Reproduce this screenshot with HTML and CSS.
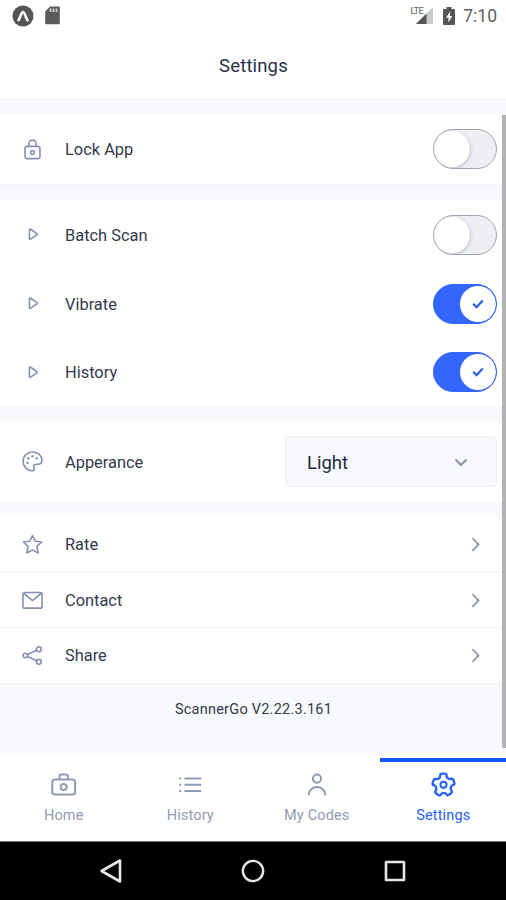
FILE: index.html
```html
<!DOCTYPE html>
<html lang="en">
<head>
<meta charset="utf-8">
<title>Settings</title>
<link rel="stylesheet" href="styles.css">
</head>
<body>
<div class="screen">
  <div class="statusbar">
    <svg class="st-expo" viewBox="0 0 22 22"><circle cx="11" cy="11" r="10.500" fill="#555"/><path d="M6.500 15.200C8.500 12.500 9.300 7 11 7s2.500 5.500 4.500 8.200" fill="none" stroke="#fff" stroke-width="2.600" stroke-linecap="round"/></svg>
    <svg class="st-sd" viewBox="0 0 15 19"><path d="M5 .5h8.500a1.300 1.300 0 0 1 1.300 1.300V17a1.300 1.300 0 0 1-1.300 1.300H1.500A1.300 1.300 0 0 1 .2 17V5.500z" fill="#5a5a5a"/><path d="M5.500 2.500v3.500M8.500 2.500v3.500M11.500 2.500v3.500" stroke="#d4d4d4" stroke-width="1.700"/></svg>
    <span class="spacer"></span>
    <span class="lte">LTE</span>
    <svg class="st-signal" viewBox="0 0 17 17"><path d="M0 17 17 0v17z" fill="#c9c9c9"/><path d="M0 17 10.500 6.500V17z" fill="#555"/></svg>
    <svg class="st-battery" viewBox="0 0 12 18"><path d="M3.500 0h5v2H11a1 1 0 0 1 1 1v14a1 1 0 0 1-1 1H1a1 1 0 0 1-1-1V3a1 1 0 0 1 1-1h2.500z" fill="#555"/><path d="M7.500 4 3 10.700h2.500V15.500L9.200 9H6.700z" fill="#fff"/></svg>
    <span class="clock">7:10</span>
  </div>
  <header class="header">Settings</header>

  <main class="content">
    <section class="group">
      <div class="row lock">
        <svg class="icon" viewBox="0 0 24 24"><rect x="4.200" y="8.800" width="15.600" height="12.700" rx="2.200"/><path d="M8.200 8.800V6a3.800 3.800 0 0 1 7.600 0v2.800"/><circle cx="12" cy="15.200" r="2"/></svg>
        <span class="label">Lock App</span>
        <span class="toggle"><span class="knob"></span></span>
      </div>
    </section>

    <section class="group options">
      <div class="row">
        <svg class="icon" viewBox="0 0 24 24"><path d="M8.800 7v9.400q.2 1 1.300.5l6.400-4.500q.8-.7 0-1.400l-6.400-4.500q-1.100-.5-1.300.5z"/></svg>
        <span class="label">Batch Scan</span>
        <span class="toggle"><span class="knob"></span></span>
      </div>
      <div class="row">
        <svg class="icon" viewBox="0 0 24 24"><path d="M8.800 7v9.400q.2 1 1.300.5l6.400-4.500q.8-.7 0-1.400l-6.400-4.500q-1.100-.5-1.300.5z"/></svg>
        <span class="label">Vibrate</span>
        <span class="toggle on"><span class="knob"><svg class="check" viewBox="0 0 12 10"><path d="M1.200 4.800 4.500 8.200 10.800 1.600"/></svg></span></span>
      </div>
      <div class="row">
        <svg class="icon" viewBox="0 0 24 24"><path d="M8.800 7v9.400q.2 1 1.300.5l6.400-4.500q.8-.7 0-1.400l-6.400-4.500q-1.100-.5-1.300.5z"/></svg>
        <span class="label">History</span>
        <span class="toggle on"><span class="knob"><svg class="check" viewBox="0 0 12 10"><path d="M1.200 4.800 4.500 8.200 10.800 1.600"/></svg></span></span>
      </div>
    </section>

    <section class="group look">
      <div class="row appearance">
        <svg class="icon" viewBox="0 0 24 24"><path d="M12.600 2.100C6.500 1.800 2.100 6.200 2.100 11.800c0 5.200 4.200 9.900 9.500 9.900 2.300 0 3-1.800 2-3.300-.9-1.600-.1-3.500 1.900-3.500h2.300c2.600 0 4.300-1.600 4.200-4.200-.3-4.900-4.500-8.400-9.400-8.600z"/><g class="dots"><circle cx="6.800" cy="13.300" r="1.300"/><circle cx="7.600" cy="8.500" r="1.300"/><circle cx="12" cy="6.400" r="1.300"/><circle cx="16.400" cy="8.500" r="1.300"/></g></svg>
        <span class="label">Apperance</span>
        <span class="select"><span class="value">Light</span><svg class="chevron-down" viewBox="0 0 14 9"><path d="M1.500 1.500 7 7l5.500-5.500"/></svg></span>
      </div>
    </section>

    <section class="group links">
      <div class="row">
        <svg class="icon" viewBox="0 0 24 24"><path d="m12 2.500 2.800 6.100 6.800.8-5 4.600 1.300 6.900L12 17.600l-5.900 3.300L7.400 14l-5-4.600 6.800-.8z"/></svg>
        <span class="label">Rate</span>
        <svg class="chevron" viewBox="0 0 9 15"><path d="m1.500 1.200 6 6.300-6 6.300"/></svg>
      </div>
      <div class="row">
        <svg class="icon" viewBox="0 0 24 24"><rect x="2" y="3.600" width="20" height="16.400" rx="1.800"/><path d="m3 4.600 9 7.500 9-7.500"/></svg>
        <span class="label">Contact</span>
        <svg class="chevron" viewBox="0 0 9 15"><path d="m1.500 1.200 6 6.300-6 6.300"/></svg>
      </div>
      <div class="row">
        <svg class="icon" viewBox="0 0 24 24"><circle cx="4.600" cy="12" r="2.300"/><circle cx="18.600" cy="5.400" r="2.500"/><circle cx="18.600" cy="18.600" r="2.500"/><path d="m6.700 11 9.600-4.500M6.700 13l9.600 4.500"/></svg>
        <span class="label">Share</span>
        <svg class="chevron" viewBox="0 0 9 15"><path d="m1.500 1.200 6 6.300-6 6.300"/></svg>
      </div>
    </section>

    <p class="version">ScannerGo V2.22.3.161</p>
    <span class="scrollbar"></span>
  </main>

  <nav class="tabs">
    <div class="tab">
      <svg viewBox="0 0 28 28"><rect x="2.300" y="8.600" width="22.800" height="15" rx="2.600"/><path d="M9.500 8.600V5.400a1.800 1.800 0 0 1 1.800-1.800h4.800a1.800 1.800 0 0 1 1.800 1.800v3.200"/><circle cx="13.700" cy="16.100" r="3"/></svg>
      <span>Home</span>
    </div>
    <div class="tab">
      <svg viewBox="0 0 28 28"><path d="M8.500 7.500h16.700M8.500 13.700h16.700M8.500 19.900h16.700M3.200 7.500h2M3.200 13.700h2M3.200 19.900h2"/></svg>
      <span>History</span>
    </div>
    <div class="tab">
      <svg viewBox="0 0 28 28"><circle cx="14" cy="7.600" r="4.100"/><path d="M5.800 24.300v-.6c0-4.600 3.600-7.600 8.200-7.600s8.200 3 8.200 7.600v.6"/></svg>
      <span>My Codes</span>
    </div>
    <div class="tab active">
      <svg class="gear" viewBox="0 0 24 24"><path d="M8.610 22a2.250 2.250 0 0 1-1.350-.46L5.190 20a2.370 2.370 0 0 1-.49-3.220 2.060 2.060 0 0 0 .23-1.860l-.06-.16a1.830 1.830 0 0 0-1.120-1.220h-.16a2.340 2.340 0 0 1-1.480-2.940L2.930 8a2.180 2.180 0 0 1 1.120-1.410 2.140 2.140 0 0 1 1.680-.12 1.930 1.930 0 0 0 1.780-.29l.13-.1a1.940 1.940 0 0 0 .73-1.510v-.24A2.320 2.320 0 0 1 10.660 2h2.550a2.260 2.260 0 0 1 1.600.67 2.370 2.370 0 0 1 .68 1.680v.28a1.760 1.760 0 0 0 .69 1.430l.11.08a1.740 1.740 0 0 0 1.590.26l.34-.11A2.260 2.260 0 0 1 21.100 7.800l.79 2.520a2.360 2.360 0 0 1-1.460 2.930l-.2.070A1.890 1.890 0 0 0 19 14.600a2 2 0 0 0 .25 1.650l.26.38a2.380 2.380 0 0 1-.5 3.230L17 21.410a2.240 2.240 0 0 1-3.220-.53l-.12-.17a1.750 1.750 0 0 0-1.500-.78 1.800 1.800 0 0 0-1.430.77l-.23.33A2.250 2.250 0 0 1 9 22a2 2 0 0 1-.39 0zM4.400 11.620a3.830 3.830 0 0 1 2.380 2.500v.12a4 4 0 0 1-.46 3.620.38.38 0 0 0 0 .51L8.470 20a.25.25 0 0 0 .37-.07l.23-.33a3.770 3.770 0 0 1 6.200 0l.12.18a.3.3 0 0 0 .18.12.25.25 0 0 0 .19-.05l2.060-1.560a.36.36 0 0 0 .07-.49l-.26-.38A4 4 0 0 1 17.100 14a3.920 3.920 0 0 1 2.490-2.610l.2-.07a.34.34 0 0 0 .19-.44l-.78-2.490a.35.35 0 0 0-.2-.19.21.21 0 0 0-.19 0l-.34.11a3.740 3.740 0 0 1-3.430-.57L15 7.650a3.760 3.760 0 0 1-1.490-3v-.31a.37.37 0 0 0-.1-.26.31.31 0 0 0-.21-.08h-2.540a.31.31 0 0 0-.29.33v.25a3.900 3.900 0 0 1-1.520 3.090l-.13.1a3.910 3.910 0 0 1-3.630.59.22.22 0 0 0-.14 0 .28.28 0 0 0-.12.15L4 11.120a.36.36 0 0 0 .22.45z"/><circle cx="12" cy="12.300" r="2.500"/></svg>
      <span>Settings</span>
    </div>
  </nav>

  <div class="system-nav">
    <svg viewBox="0 0 24 26"><path d="M21 2.500v21L2.500 13z"/></svg>
    <svg viewBox="0 0 26 26"><circle cx="13" cy="13" r="11"/></svg>
    <svg viewBox="0 0 24 24"><rect x="3" y="3" width="18" height="18"/></svg>
  </div>
</div>
</body>
</html>
```
FILE: styles.css
```css
* { box-sizing: border-box; }
body { margin: 0; font-family: Roboto, "Liberation Sans", sans-serif; color: #34394c; }
svg { display: block; flex: none; }
.screen { width: 506px; height: 900px; display: flex; flex-direction: column; background: #fff; overflow: hidden; }

.statusbar { height: 31px; flex: none; display: flex; align-items: center; padding: 0 9px 0 12px; color: #626262; }
.spacer { flex: 1; }
.st-expo { width: 22px; height: 22px; }
.st-sd { width: 15px; height: 19px; margin-left: 11px; }
.lte { font-size: 9.5px; line-height: 9px; align-self: flex-start; margin: 6px -7px 0 0; letter-spacing: -0.7px; z-index: 1; }
.st-signal { width: 17px; height: 17px; }
.st-battery { width: 12px; height: 18px; margin-left: 10px; }
.clock { font-size: 17.5px; margin-left: 8px; }

.header { height: 68px; flex: none; display: flex; align-items: center; justify-content: center; padding: 3px 0 0 1px; font-size: 18.5px; letter-spacing: 0.15px; color: #2a304a; border-bottom: 1px solid #f1f3f7; }

.content { flex: 1; position: relative; background: #f7f9fc; padding-top: 15px; display: flex; flex-direction: column; }
.group { background: #fff; border-bottom: 1px solid #f1f3f7; margin-bottom: 15px; }
.row { height: 69px; display: flex; align-items: center; padding: 0 9px 0 21px; }
.lock { height: 70px; }
.options { margin-bottom: 14px; }
.options .row:last-child { height: 68px; }
.look { margin-bottom: 13px; }
.icon { width: 23px; height: 23px; fill: none; stroke: #8592b2; stroke-width: 1.700; stroke-linejoin: round; stroke-linecap: round; }
.dots { fill: #8592b2; stroke: none; }
.label { flex: 1; margin-left: 21px; padding-top: 1px; font-size: 16.4px; }

.toggle { width: 64px; height: 40px; border: 1px solid #a0a3b6; border-radius: 20px; background: #eceef4; display: flex; align-items: center; overflow: hidden; }
.knob { width: 36px; height: 36px; border-radius: 50%; background: #fff; display: flex; align-items: center; justify-content: center; box-shadow: 1px 1px 3px rgba(60, 65, 90, .25); }
.toggle.on { background: #3366ff; border-color: #3366ff; justify-content: flex-end; }
.toggle.on .knob { box-shadow: none; }
.check { width: 12px; height: 10px; fill: none; stroke: #285ae8; stroke-width: 2.200; }

.appearance { height: 81px; }
.select { width: 212px; height: 51px; border: 1px solid #eceff5; border-radius: 5px; background: #f7f9fc; display: flex; align-items: center; justify-content: space-between; padding: 1px 28px 0 21px; }
.value { padding-top: 1px; font-size: 18.5px; color: #222b45; }
.chevron-down { width: 14px; height: 9px; fill: none; stroke: #8792ac; stroke-width: 2; }

.links { margin-bottom: 0; }
.links .row { height: 55px; padding-right: 26px; }
.links .row:first-child { height: 57px; border-bottom: 2px solid #f5f7fa; padding-top: 2px; }
.links .row:nth-child(2) { border-bottom: 1px solid #f1f3f7; }
.links .label { padding-top: 0; }
.chevron { width: 9px; height: 15px; fill: none; stroke: #8f9bb3; stroke-width: 1.900; }

.version { margin: 17px 0 0; padding-left: 1px; text-align: center; font-size: 14.5px; letter-spacing: 0.24px; line-height: 18px; }
.scrollbar { position: absolute; right: 0; top: 16px; width: 4px; height: 633px; background: #b3b3b3; }

.tabs { height: 85px; flex: none; display: flex; background: #fff; }
.tab { flex: 1; display: flex; flex-direction: column; align-items: center; padding: 15px 0 0 1px; border-top: 0 solid #1555f5; font-size: 14.5px; letter-spacing: 0.15px; color: #8f9bb3; }
.tab svg { width: 28px; height: 28px; fill: none; stroke: currentColor; stroke-width: 2; }
.tab span { margin-top: 8px; line-height: 18px; }
.tab.active { color: #2862f5; border-top-width: 4px; margin-top: 2px; padding-top: 8px; }
.tab .gear { width: 29px; height: 29px; fill: currentColor; stroke: none; }
.tab .gear circle { fill: none; stroke: currentColor; stroke-width: 1.700; }

.system-nav { height: 59px; flex: none; background: #000; border-top: 1px solid #777; display: flex; align-items: center; justify-content: center; gap: 118px; }
.system-nav svg { width: 24px; height: 26px; fill: none; stroke: #e6e6e6; stroke-width: 2.600; stroke-linejoin: round; }
```
